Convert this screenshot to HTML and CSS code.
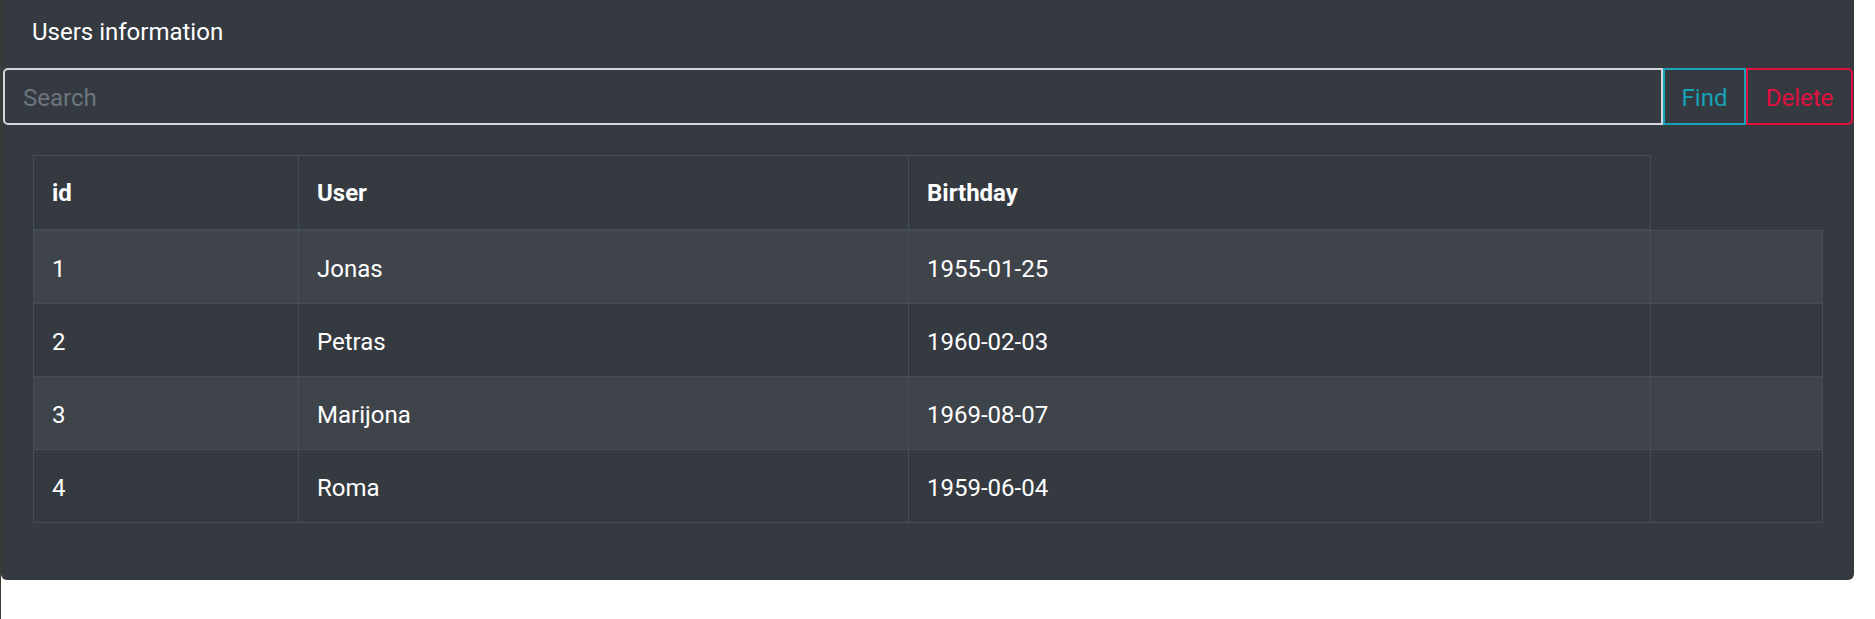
FILE: index.html
```html
<!DOCTYPE html>
<html lang="en">
<head>
<meta charset="utf-8">
<title>Users information</title>
<link rel="stylesheet" href="styles.css">
</head>
<body>
<div class="page">
  <div class="card">
    <div class="card-header">Users information</div>
    <div class="search-group">
      <input class="search-input" type="text" placeholder="Search">
      <button class="btn btn-find" type="button">Find</button>
      <button class="btn btn-delete" type="button">Delete</button>
    </div>
    <div class="card-body">
      <table class="users-table">
        <colgroup>
          <col class="col-id">
          <col class="col-user">
          <col class="col-birthday">
          <col class="col-extra">
        </colgroup>
        <thead>
          <tr>
            <th>id</th>
            <th>User</th>
            <th>Birthday</th>
          </tr>
        </thead>
        <tbody>
          <tr class="striped"><td>1</td><td>Jonas</td><td>1955-01-25</td><td></td></tr>
          <tr><td>2</td><td>Petras</td><td>1960-02-03</td><td></td></tr>
          <tr class="striped"><td>3</td><td>Marijona</td><td>1969-08-07</td><td></td></tr>
          <tr><td>4</td><td>Roma</td><td>1959-06-04</td><td></td></tr>
        </tbody>
      </table>
    </div>
  </div>
</div>
</body>
</html>
```

FILE: styles.css
```css
html, body {
  margin: 0;
  padding: 0;
  background: #ffffff;
}

body {
  font-family: Roboto, "Liberation Sans", Arial, sans-serif;
  font-size: 24px;
  line-height: 36px;
  color: #ffffff;
}

.page {
  border-left: 1px solid #3c3c34;
  min-height: 100vh;
  box-sizing: border-box;
  padding-right: 21px;
}

.card {
  background: #343a40;
  border-radius: 0 0 6px 6px;
  padding-bottom: 57px;
}

.card-header {
  padding: 14px 30px 18px 31px;
  line-height: 36px;
}

.search-group {
  display: flex;
  padding: 0 1px 0 2px;
  height: 57px;
}

.search-input {
  flex: 1 1 auto;
  min-width: 0;
  box-sizing: border-box;
  height: 57px;
  margin: 0;
  padding: 2px 18px 0;
  background: transparent;
  border: 2px solid #d3d6da;
  border-radius: 5px 0 0 5px;
  font-family: Roboto, "Liberation Sans", Arial, sans-serif;
  font-size: 24px;
  color: #ffffff;
  outline: none;
}

.search-input::placeholder {
  color: #6c757d;
}

.btn {
  box-sizing: border-box;
  height: 57px;
  margin: 0;
  padding: 2px 0 0;
  background: transparent;
  font-family: Roboto, "Liberation Sans", Arial, sans-serif;
  font-size: 24px;
  line-height: 36px;
  text-align: center;
  cursor: pointer;
}

.btn-find {
  width: 83px;
  flex: 0 0 83px;
  border: 2px solid #17a2b8;
  border-radius: 0;
  color: #17a2b8;
}

.btn-delete {
  width: 107px;
  flex: 0 0 107px;
  border: 2px solid #e0103f;
  border-radius: 0 5px 5px 0;
  color: #e0103f;
}

.card-body {
  padding: 30px 31px 0 32px;
}

.users-table {
  width: 1789px;
  table-layout: fixed;
  border-collapse: collapse;
  color: #ffffff;
}

.col-id { width: 265px; }
.col-user { width: 610px; }
.col-birthday { width: 742px; }
.col-extra { width: 172px; }

.users-table th,
.users-table td {
  padding: 19px 18px 17px;
  line-height: 36px;
  text-align: left;
  vertical-align: top;
  border: 1px solid #454d55;
}

.users-table th {
  font-weight: 700;
  padding-bottom: 18px;
  border-bottom: 2px solid #454d55;
}

.users-table td {
  padding-top: 20px;
  padding-bottom: 16px;
}

.users-table tr.striped td {
  background: #3e444a;
}
```
